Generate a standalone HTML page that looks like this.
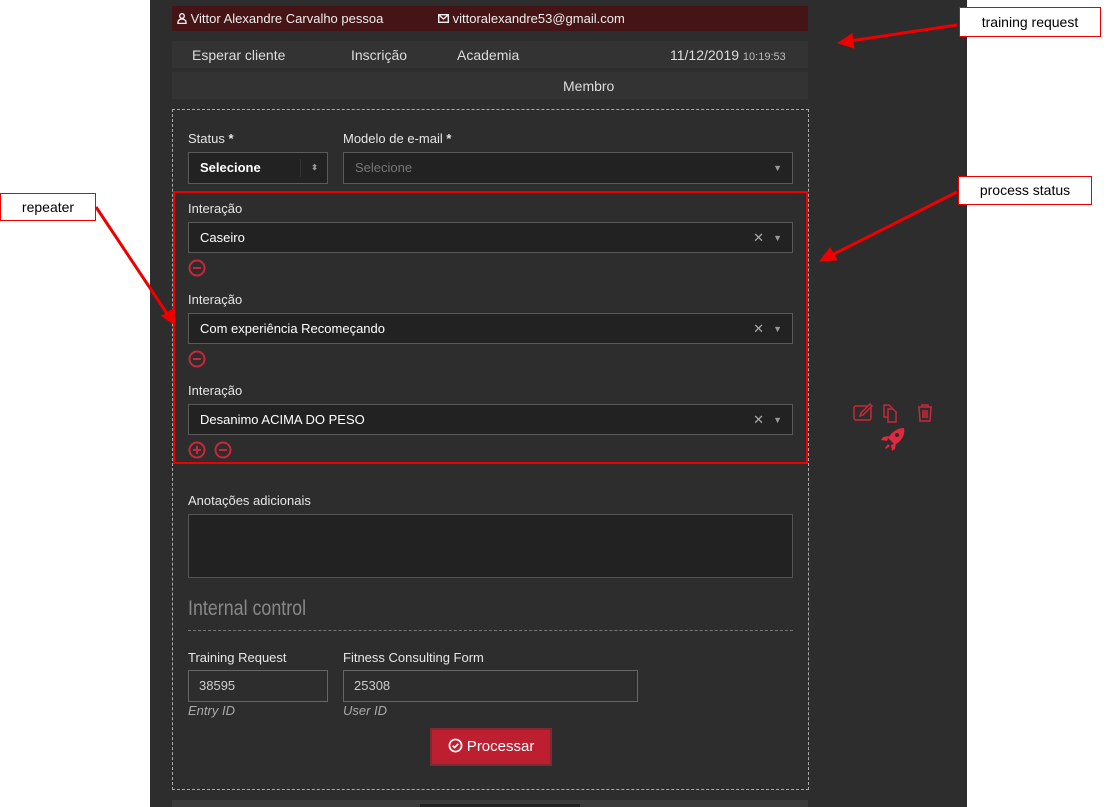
<!DOCTYPE html>
<html><head><meta charset="utf-8"><style>
*{box-sizing:border-box;margin:0;padding:0}
body{width:1113px;height:807px;background:#fff;position:relative;overflow:hidden;font-family:"Liberation Sans",sans-serif;font-size:13px;color:#ddd}
.a{position:absolute}
.panel{left:150px;top:0;width:817px;height:807px;background:#2d2d2d}
.lbl{color:#e6e6e6;font-size:13px}
.inp{background:#222;border:1px solid #555}
.sel{background:#222;border:1px solid #5a5a5a;color:#fff;font-size:13px;padding-left:11px;line-height:30px}
.x{position:absolute;right:28px;top:0;color:#aaa;font-size:13px}
.car{position:absolute;right:10px;top:0;color:#999;font-size:9px}
.note{background:#fff;border:1px solid #e00;color:#000;font-size:14px;text-align:center}
</style></head><body>
<div class="a panel"></div>
<div class="a" style="left:172px;top:6px;width:636px;height:25px;background:#451417"></div>
<div class="a" style="left:177px;top:11px;color:#eee;font-size:13px">
<svg width="10" height="11" viewBox="0 0 10 11" style="vertical-align:-1px"><circle cx="5" cy="3" r="2.3" fill="none" stroke="#eee" stroke-width="1.4"/><path d="M1 10.5V9a4 3 0 0 1 8 0v1.5z" fill="none" stroke="#eee" stroke-width="1.4"/></svg> Vittor Alexandre Carvalho pessoa</div>
<div class="a" style="left:438px;top:11px;color:#eee;font-size:13px">
<svg width="11" height="9" viewBox="0 0 11 9" style="vertical-align:0"><rect x=".7" y=".7" width="9.6" height="7.6" fill="none" stroke="#eee" stroke-width="1.4"/><path d="M1 1l4.5 4 4.5-4" fill="none" stroke="#eee" stroke-width="1.4"/></svg> vittoralexandre53@gmail.com</div>
<div class="a" style="left:172px;top:41px;width:636px;height:27px;background:#333"></div>
<div class="a" style="left:192px;top:47px;font-size:14px;color:#ddd">Esperar cliente</div>
<div class="a" style="left:351px;top:47px;font-size:14px;color:#ddd">Inscrição</div>
<div class="a" style="left:457px;top:47px;font-size:14px;color:#ddd">Academia</div>
<div class="a" style="left:670px;top:47px;font-size:14px;color:#ddd">11/12/2019 <span style="font-size:11px;color:#bbb">10:19:53</span></div>
<div class="a" style="left:172px;top:72px;width:636px;height:27px;background:#333"></div>
<div class="a" style="left:563px;top:78px;font-size:14px;color:#ddd">Membro</div>
<div class="a" style="left:172px;top:109px;width:637px;height:681px;border:1px dashed #aaa"></div>
<div class="a lbl" style="left:188px;top:131px">Status <b>*</b></div>
<div class="a lbl" style="left:343px;top:131px">Modelo de e-mail <b>*</b></div>
<div class="a sel" style="left:188px;top:152px;width:140px;height:32px;font-weight:bold">Selecione<span style="position:absolute;right:26px;top:6px;height:18px;border-left:1px solid #333"></span><span style="position:absolute;right:9px;top:0;color:#999;font-size:8px">⬍</span></div>
<div class="a sel" style="left:343px;top:152px;width:450px;height:32px;color:#777">Selecione<span class="car">▼</span></div>
<div class="a" style="left:173px;top:191px;width:635px;height:273px;border:2px solid #e00"></div>
<div class="a lbl" style="left:188px;top:201px">Interação</div>
<div class="a sel" style="left:188px;top:222px;width:605px;height:31px">Caseiro<span class="x">✕</span><span class="car">▼</span></div>
<div class="a lbl" style="left:188px;top:292px">Interação</div>
<div class="a sel" style="left:188px;top:313px;width:605px;height:31px">Com experiência Recomeçando<span class="x">✕</span><span class="car">▼</span></div>
<div class="a lbl" style="left:188px;top:383px">Interação</div>
<div class="a sel" style="left:188px;top:404px;width:605px;height:31px">Desanimo ACIMA DO PESO<span class="x">✕</span><span class="car">▼</span></div>
<svg class="a" style="left:188px;top:259px" width="18" height="18"><circle cx="9" cy="9" r="7.5" fill="none" stroke="#c8283a" stroke-width="2"/><path d="M5 9h8" stroke="#c8283a" stroke-width="2"/></svg>
<svg class="a" style="left:188px;top:350px" width="18" height="18"><circle cx="9" cy="9" r="7.5" fill="none" stroke="#c8283a" stroke-width="2"/><path d="M5 9h8" stroke="#c8283a" stroke-width="2"/></svg>
<svg class="a" style="left:188px;top:441px" width="18" height="18"><circle cx="9" cy="9" r="7.5" fill="none" stroke="#c8283a" stroke-width="2"/><path d="M5 9h8M9 5v8" stroke="#c8283a" stroke-width="2"/></svg>
<svg class="a" style="left:214px;top:441px" width="18" height="18"><circle cx="9" cy="9" r="7.5" fill="none" stroke="#c8283a" stroke-width="2"/><path d="M5 9h8" stroke="#c8283a" stroke-width="2"/></svg>
<div class="a lbl" style="left:188px;top:493px">Anotações adicionais</div>
<div class="a inp" style="left:188px;top:514px;width:605px;height:64px"></div>
<div class="a" style="left:188px;top:597px;font-size:21px;color:#888;transform:scaleX(.85);transform-origin:left">Internal control</div>
<div class="a" style="left:188px;top:630px;width:605px;border-top:1px dashed #777"></div>
<div class="a lbl" style="left:188px;top:650px">Training Request</div>
<div class="a lbl" style="left:343px;top:650px">Fitness Consulting Form</div>
<div class="a" style="left:188px;top:670px;width:140px;height:32px;border:1px solid #666;background:#2d2d2d;color:#ccc;padding-left:10px;line-height:30px">38595</div>
<div class="a" style="left:343px;top:670px;width:295px;height:32px;border:1px solid #666;background:#2d2d2d;color:#ccc;padding-left:10px;line-height:30px">25308</div>
<div class="a" style="left:188px;top:703px;color:#aaa;font-style:italic">Entry ID</div>
<div class="a" style="left:343px;top:703px;color:#aaa;font-style:italic">User ID</div>
<div class="a" style="left:430px;top:728px;width:122px;height:38px;background:#be1f30;border:2px solid #7d2a33;color:#fff;font-size:15px;text-align:center;line-height:34px">
<svg width="15" height="15" viewBox="0 0 16 16" style="vertical-align:-2px"><circle cx="8" cy="8" r="6.5" fill="none" stroke="#fff" stroke-width="1.8"/><path d="M5 8.2l2 2 4-4" fill="none" stroke="#fff" stroke-width="1.8"/></svg> Processar</div>
<div class="a" style="left:172px;top:800px;width:636px;height:7px;background:#3a3a3a"></div>
<div class="a" style="left:420px;top:804px;width:160px;height:3px;background:#222"></div>
<svg class="a" style="left:852px;top:402px" width="90" height="22" viewBox="0 0 90 22">
<g fill="none" stroke="#c8283a" stroke-width="1.5">
<rect x="2" y="4" width="17" height="14" rx="2"/><path d="M8 14l1-3 9-9 2 2-9 9z" fill="#2d2d2d"/>
<path d="M32 7v-4h5l3 3v9h-8z"/><path d="M36 11v-4h5l3 3v10h-8z" fill="#2d2d2d"/>
<path d="M66 5h14M70 5v-2h6v2M67 5l1 14h10l1-14M71 8v8M73 8v8M75 8v8"/></g>
</svg>
<svg class="a" style="left:880px;top:427px" width="26" height="26" viewBox="0 0 26 26">
<path d="M24 1c-5 0-9 2-13 6l-3 4 7 7 4-3c4-4 6-8 5-14z" fill="#e0283f"/>
<path d="M9 9l-6 1-2 3 6 1z" fill="#e0283f"/>
<path d="M16 16l-1 6-3 2-1-6z" fill="#e0283f"/>
<path d="M8 17l-3 4 1 1 4-3z" fill="#e0283f"/>
<circle cx="17" cy="8" r="2" fill="#2d2d2d"/>
</svg>
<div class="a note" style="left:959px;top:7px;width:142px;height:30px;line-height:28px">training request</div>
<div class="a note" style="left:958px;top:176px;width:134px;height:29px;line-height:27px">process status</div>
<div class="a note" style="left:0;top:193px;width:96px;height:28px;line-height:26px">repeater</div>
<svg class="a" style="left:0;top:0" width="1113" height="807">
<g stroke="#e00" stroke-width="3" fill="#e00">
<line x1="957" y1="25" x2="850" y2="41"/><polygon points="838,43 852,34 854,48" stroke-width="1"/>
<line x1="957" y1="192" x2="832" y2="255"/><polygon points="820,261 830,248 837,260" stroke-width="1"/>
<line x1="96" y1="207" x2="168" y2="315"/><polygon points="175,325 162,316 173,309" stroke-width="1"/>
</g></svg>
</body></html>
